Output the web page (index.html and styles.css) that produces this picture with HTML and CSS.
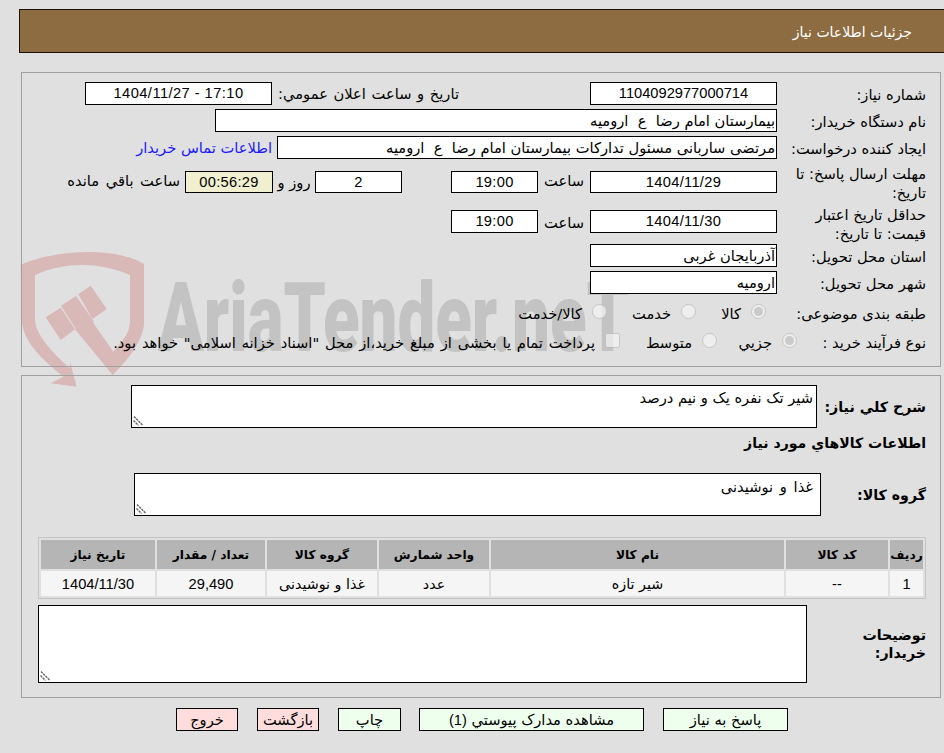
FILE: index.html
```html
<!DOCTYPE html>
<html lang="fa" dir="rtl">
<head>
<meta charset="utf-8">
<title>جزئیات اطلاعات نیاز</title>
<link rel="stylesheet" href="styles.css">
</head>
<body>
<div class="watermark" aria-hidden="true">
  <svg class="wm-shield" viewBox="0 0 450 450" width="150" height="150">
    <path d="M62 75C130 40 330 10 432 72L432 250C430 300 385 360 338 405L225 268 270 235 340 335C370 300 390 280 390 240L390 105C300 65 190 65 105 105L105 240C108 290 170 350 210 385L210 365 230 440 152 430 190 410C130 360 70 310 65 240Z"/>
    <path d="M137 232 182 203 225 268 182 300Z"/>
    <path d="M183 197 228 168 282 245 235 278Z"/>
    <path d="M235 163 272 137 320 207 277 237Z"/>
  </svg>
  <span class="wm-text" dir="ltr">AriaTender.neT</span>
</div>

<header class="title-bar">جزئیات اطلاعات نیاز</header>

<section class="box box-top">
  <div class="row">
    <div class="lbl">شماره نیاز:</div>
    <div class="field w187 num center tight">1104092977000714</div>
    <div class="lbl2">تاریخ و ساعت اعلان عمومي:</div>
    <div class="field w187 num center wide" dir="ltr">1404/11/27 - 17:10</div>
  </div>
  <div class="row">
    <div class="lbl">نام دستگاه خریدار:</div>
    <div class="field w562">بیمارستان امام رضا&nbsp; ع&nbsp; ارومیه</div>
  </div>
  <div class="row">
    <div class="lbl">ایجاد کننده درخواست:</div>
    <div class="field w500">مرتضی ساربانی مسئول تدارکات بیمارستان امام رضا&nbsp; ع&nbsp; ارومیه</div>
    <a class="contact" href="#">اطلاعات تماس خریدار</a>
  </div>
  <div class="row row-deadline">
    <div class="lbl">مهلت ارسال پاسخ: تا تاریخ:</div>
    <div class="field w187 h22 num center">1404/11/29</div>
    <div class="hour">ساعت</div>
    <div class="field w87 h22 num center">19:00</div>
    <div class="field w87 h22 num center days">2</div>
    <div class="day-txt">روز و</div>
    <div class="field timer h22 num center">00:56:29</div>
    <div class="remain">ساعت باقي مانده</div>
  </div>
  <div class="row row-valid">
    <div class="lbl">حداقل تاریخ اعتبار قیمت: تا تاریخ:</div>
    <div class="field w187 num center">1404/11/30</div>
    <div class="hour">ساعت</div>
    <div class="field w87 num center">19:00</div>
  </div>
  <div class="row row-prov">
    <div class="lbl">استان محل تحویل:</div>
    <div class="field w187">آذربایجان غربی</div>
  </div>
  <div class="row">
    <div class="lbl">شهر محل تحویل:</div>
    <div class="field w187">ارومیه</div>
  </div>
  <div class="row row-opts row-cat">
    <div class="lbl">طبقه بندی موضوعی:</div>
    <label class="opt o70"><input type="radio" name="cat" checked disabled><span>کالا</span></label>
    <label class="opt o89"><input type="radio" name="cat" disabled><span>خدمت</span></label>
    <label class="opt"><input type="radio" name="cat" disabled><span>کالا/خدمت</span></label>
  </div>
  <div class="row row-opts row-proc">
    <div class="lbl lbl-proc">نوع فرآیند خرید :</div>
    <label class="opt o80"><input type="radio" name="proc" checked disabled><span>جزیي</span></label>
    <label class="opt o97"><input type="radio" name="proc" disabled><span>متوسط</span></label>
    <label class="opt opt-note"><input type="checkbox" disabled><span>پرداخت تمام یا بخشی از مبلغ خرید،از محل "اسناد خزانه اسلامی" خواهد بود.</span></label>
  </div>
</section>

<section class="box box-bottom">
  <div class="row row-desc">
    <div class="blbl blbl-desc">شرح کلي نیاز:</div>
    <textarea class="area area-desc" readonly>شیر تک نفره یک و نیم درصد</textarea>
  </div>
  <h2 class="heading">اطلاعات کالاهاي مورد نیاز</h2>
  <div class="row row-group">
    <div class="blbl blbl-group">گروه کالا:</div>
    <textarea class="area area-group" readonly>غذا و نوشیدنی</textarea>
  </div>
  <table class="items">
    <colgroup>
      <col class="c1"><col class="c2"><col class="c3"><col class="c4"><col class="c5"><col class="c6"><col class="c7">
    </colgroup>
    <thead>
      <tr><th>ردیف</th><th>کد کالا</th><th>نام کالا</th><th>واحد شمارش</th><th>گروه کالا</th><th>تعداد / مقدار</th><th>تاریخ نیاز</th></tr>
    </thead>
    <tbody>
      <tr><td class="num">1</td><td class="num">--</td><td>شیر تازه</td><td>عدد</td><td>غذا و نوشیدنی</td><td class="num">29,490</td><td class="num">1404/11/30</td></tr>
    </tbody>
  </table>
  <div class="row row-notes">
    <div class="blbl blbl-notes">توضیحات خریدار:</div>
    <textarea class="area area-notes" readonly></textarea>
  </div>
</section>

<div class="actions">
  <button class="btn ok b125" type="button">پاسخ به نیاز</button>
  <button class="btn ok b225" type="button">مشاهده مدارک پیوستي <span class="num">(1)</span></button>
  <button class="btn ok b63" type="button">چاپ</button>
  <button class="btn no b62" type="button">بازگشت</button>
  <button class="btn no b62" type="button">خروج</button>
</div>
</body>
</html>
```
FILE: styles.css
```css
* { box-sizing: border-box; }
html, body { margin: 0; padding: 0; }
body {
  position: relative;
  height: 753px;
  overflow: hidden;
  background: #e0e0e0;
  color: #000;
  font-family: "DejaVu Sans", sans-serif;
  font-size: 14.67px;
}
.num { font-family: "Liberation Sans", "DejaVu Sans", sans-serif; font-size: 14.67px; }
.watermark { position: absolute; left: 0; top: 0; width: 944px; height: 753px; z-index: -1; }
.wm-shield { position: absolute; left: 0; top: 240px; fill: #d9b8b8; }
.wm-text {
  position: absolute;
  left: 158px;
  top: 263px;
  font-family: "Roboto", sans-serif;
  font-weight: 900;
  font-size: 96px;
  line-height: 110px;
  color: #c3c3c3;
  transform: scaleX(0.7);
  transform-origin: left top;
  white-space: nowrap;
}
.title-bar {
  height: 44px;
  margin: 9px -2px 0 19px;
  padding: 0 33px 0 0;
  background: #8d6c41;
  border: 1px solid #1a1208;
  color: #fff;
  font-size: 14px;
  line-height: 44px;
}
.box { width: 920px; margin-left: 21px; margin-right: 3px; border: 1px solid #a0a0a0; padding-right: 14px; }
.box-top { height: 295px; margin-top: 19px; padding-top: 9px; }
.box-bottom { height: 323px; margin-top: 8px; padding-top: 9px; }
.row { display: flex; align-items: center; margin-bottom: 4px; }
.lbl { width: 149px; line-height: 19px; flex: none; padding-top: 1px; }
.field {
  height: 23px;
  flex: none;
  background: #fff;
  border: 1px solid #000;
  padding: 0 1px;
  line-height: 21px;
  white-space: nowrap;
  overflow: hidden;
}
.h22 { height: 22px; line-height: 20px; }
.center { text-align: center; letter-spacing: 0.3px; }
.center.tight { letter-spacing: 0; }
.center.wide { letter-spacing: 0.45px; }
.w187 { width: 187px; }
.w562 { width: 562px; }
.w500 { width: 500px; }
.w87 { width: 87px; }
.lbl2 { width: 187px; margin-right: 131px; flex: none; white-space: nowrap; word-spacing: 1px; }
.contact { margin-right: 5px; color: #1a1aff; text-decoration: none; }
.hour { width: 52px; text-align: center; flex: none; }
.row-deadline { height: 38px; margin-top: 4px; margin-bottom: 4px; }
.row-deadline .hour, .remain { margin-top: -3px; }
.row-valid { height: 38px; align-items: flex-start; margin-bottom: 1px; }
.row-valid .lbl { padding-top: 0; }
.row-valid .field { margin-top: 5px; }
.row-valid .hour { margin-top: 9px; }
.days { margin-right: 49px; }
.day-txt { width: 42px; text-align: center; flex: none; }
.timer { width: 88px; background: #f0f0d0; }
.remain { margin-right: 5px; word-spacing: 2px; }
.row-opts { height: 26px; margin: 0; }
.row-cat { margin-top: 6px; }
.row-proc { margin-top: 3px; }
.lbl-proc { width: 129px; }
.opt { display: flex; align-items: center; flex: none; white-space: nowrap; }
.opt input { width: 15px; height: 15px; margin: -4px 0 0 10px; flex: none; }
.opt-note { word-spacing: 1.2px; }
.row-cat .lbl + .opt { margin-right: 11px; }
.o70 { width: 70px; }
.o89 { width: 89px; }
.o80 { width: 80px; }
.o97 { width: 97px; }
.blbl { font-weight: 700; font-size: 14.2px; flex: none; line-height: 18px; }
.blbl-desc { width: 109px; }
.blbl-group { width: 105px; }
.blbl-notes { width: 119px; padding-left: 10px; }
.area {
  display: block;
  flex: none;
  margin: 0;
  background: #fff;
  border: 1px solid #000;
  border-radius: 0;
  padding: 3px 3px;
  font: inherit;
  color: inherit;
  outline: none;
}
.area::-webkit-resizer {
  background: url("data:image/svg+xml,%3Csvg xmlns='http://www.w3.org/2000/svg' width='15' height='15'%3E%3Cpath d='M2 4.5l9 9M1.5 8.5l5 5' fill='none' stroke='%23666' stroke-width='1.4' stroke-dasharray='2.4 .8'/%3E%3C/svg%3E") no-repeat left bottom;
}
.area-desc { width: 686px; height: 43px; }
.area-group { width: 687px; height: 43px; padding: 4px 7px 3px 3px; word-spacing: 2px; }
.area-notes { width: 769px; height: 78px; }
.row-desc { margin: 0; }
.heading { margin: 5px 0 0; height: 20px; font-size: 14.1px; line-height: 20px; font-weight: 700; }
.row-group { margin: 20px 0 0; }
.items {
  width: 888px;
  margin: 21px 0 0;
  table-layout: fixed;
  border: 1px solid #c4c4c4;
  border-spacing: 2px;
}
.c1 { width: 33px; }
.c2 { width: 102px; }
.c3 { width: 293px; }
.c4 { width: 110px; }
.c5 { width: 110px; }
.c6 { width: 108px; }
.c7 { width: 114px; }
.items th { height: 29px; padding: 0; background: #b5b5b5; font-size: 12.2px; font-weight: 700; white-space: nowrap; }
.items td { height: 25px; padding: 0; background: #f5f5f5; font-size: 14.3px; text-align: center; }
.items td.num { font-size: 14.67px; }
.row-notes { margin: 6px 0 0; }
.actions { display: flex; gap: 19px; margin: 10px 156px 0 0; }
.btn { height: 23px; padding: 0; border: 1px solid #000; border-radius: 0; font: inherit; color: #000; flex: none; }
.ok { background: #eeffee; }
.no { background: #ffdddd; }
.b125 { width: 125px; }
.b225 { width: 225px; }
.b63 { width: 63px; margin-right: -1px; }
.b62 { width: 62px; }
```
